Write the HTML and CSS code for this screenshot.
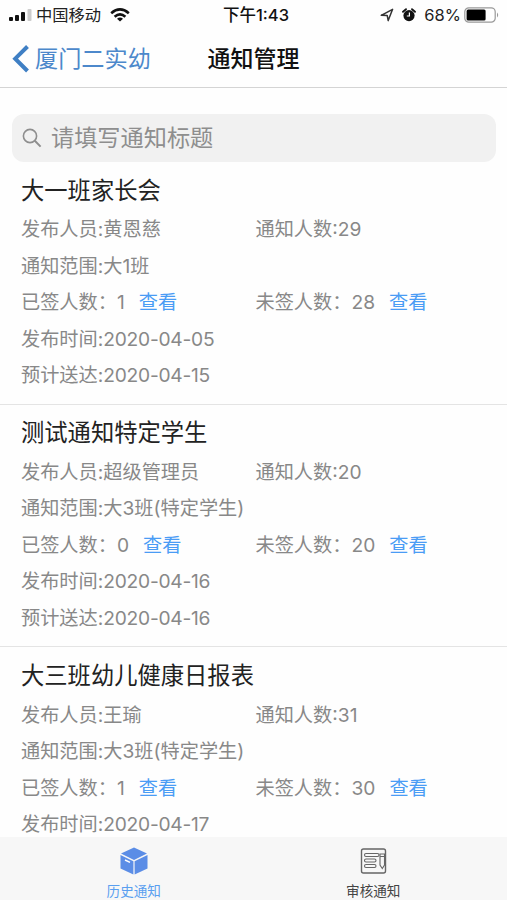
FILE: index.html
```
<!DOCTYPE html>
<html lang="zh-CN">
<head>
    <meta charset="UTF-8">
    <meta name="viewport" content="width=device-width, initial-scale=1.0">
    <title>通知管理</title>
    <link rel="stylesheet" href="styles.css">
</head>
<body>
    <div class="status-bar">
        <div class="status-left">
            <svg class="signal" viewBox="0 0 23 14" width="23" height="14">
                <rect x="0" y="9" width="4" height="4" rx="1" fill="#111"/>
                <rect x="6" y="7" width="4" height="6" rx="1" fill="#111"/>
                <rect x="12" y="4" width="4" height="9" rx="1" fill="#111"/>
                <rect x="18.5" y="1" width="4" height="12" rx="1" fill="#ccc"/>
            </svg>
            <span class="carrier">中国移动</span>
            <svg class="wifi" viewBox="0 0 20 14" width="20" height="14" fill="none" stroke="#111" stroke-width="2.6">
                <path d="M1.2 5.2Q10 -2.4 18.8 5.2"/>
                <path d="M4.6 8.7Q10 4 15.4 8.7"/>
                <path d="M10 13.6L7 10.8Q10 8.4 13 10.8Z" fill="#111" stroke="none"/>
            </svg>
        </div>
        <div class="status-time">下午1:43</div>
        <div class="status-right">
            <svg class="location" viewBox="0 0 14 14" width="14" height="14">
                <path d="M1.2 7.3L12.6 1.3L8.2 12.6L7.2 7.4Z" fill="none" stroke="#333" stroke-width="1.5" stroke-linejoin="round"/>
            </svg>
            <svg class="alarm" viewBox="0 0 14 14" width="14" height="14">
                <circle cx="7" cy="7.6" r="5.6" fill="#111"/>
                <path d="M1 3.8L4 1.2M13 3.8L10 1.2" stroke="#111" stroke-width="1.8" stroke-linecap="round"/>
                <path d="M7.4 4.6V8H4.8" fill="none" stroke="#fff" stroke-width="1.2"/>
            </svg>
            <span class="percent">68%</span>
            <svg class="battery" viewBox="0 0 36 16" width="36" height="16">
                <rect x="0.8" y="0.8" width="30.4" height="14.4" rx="4" fill="#fff" stroke="#999" stroke-width="1.2"/>
                <rect x="2.6" y="2.6" width="19" height="10.8" rx="1.5" fill="#000"/>
                <path d="M33 5.5Q35.4 8 33 10.5Z" fill="#999"/>
            </svg>
        </div>
    </div>

    <div class="nav-bar">
        <a class="back">
            <svg viewBox="0 0 18 30" width="18" height="30">
                <path d="M15.5 2.5L3.2 14.7L15.5 27" fill="none" stroke="#3f7fc4" stroke-width="4"/>
            </svg>
            <span>厦门二实幼</span>
        </a>
        <h1>通知管理</h1>
    </div>

    <div class="search">
        <svg viewBox="0 0 20 20" width="20" height="20">
            <circle cx="8" cy="8" r="6.6" fill="none" stroke="#8e8e8e" stroke-width="1.6"/>
            <path d="M12.8 12.8L18.6 18.6" stroke="#8e8e8e" stroke-width="2"/>
        </svg>
        <span>请填写通知标题</span>
    </div>

    <div class="list">
        <div class="notice">
            <h2>大一班家长会</h2>
            <div class="row">
                <div class="col">发布人员:黄恩慈</div>
                <div class="col">通知人数:29</div>
            </div>
            <div class="row">通知范围:大1班</div>
            <div class="row">
                <div class="col">已签人数：1<a class="view">查看</a></div>
                <div class="col">未签人数：28<a class="view">查看</a></div>
            </div>
            <div class="row">发布时间:<span class="date">2020-04-05</span></div>
            <div class="row">预计送达:<span class="date">2020-04-15</span></div>
        </div>
        <div class="notice">
            <h2>测试通知特定学生</h2>
            <div class="row">
                <div class="col">发布人员:超级管理员</div>
                <div class="col">通知人数:20</div>
            </div>
            <div class="row">通知范围:大3班(特定学生)</div>
            <div class="row">
                <div class="col">已签人数：0<a class="view">查看</a></div>
                <div class="col">未签人数：20<a class="view">查看</a></div>
            </div>
            <div class="row">发布时间:<span class="date">2020-04-16</span></div>
            <div class="row">预计送达:<span class="date">2020-04-16</span></div>
        </div>
        <div class="notice">
            <h2>大三班幼儿健康日报表</h2>
            <div class="row">
                <div class="col">发布人员:王瑜</div>
                <div class="col">通知人数:31</div>
            </div>
            <div class="row">通知范围:大3班(特定学生)</div>
            <div class="row">
                <div class="col">已签人数：1<a class="view">查看</a></div>
                <div class="col">未签人数：30<a class="view">查看</a></div>
            </div>
            <div class="row">发布时间:<span class="date">2020-04-17</span></div>
        </div>
    </div>

    <div class="tab-bar">
        <a class="tab active">
            <svg viewBox="0 0 28 28" width="28" height="28">
                <path d="M14 0.5L27 6.6L14 13L1 6.6Z" fill="#5b8de6"/>
                <path d="M0.5 8L13.4 14.2V27.6L0.5 21.4Z" fill="#5b8de6"/>
                <path d="M27.5 8L14.6 14.2V27.6L27.5 21.4Z" fill="#5b8de6"/>
                <path d="M5 13L10 15.3" stroke="#fff" stroke-width="1.4"/>
            </svg>
            <span>历史通知</span>
        </a>
        <a class="tab">
            <svg viewBox="0 0 28 28" width="28" height="28" fill="none" stroke="#666" stroke-width="1.1">
                <rect x="2.5" y="2" width="24" height="24" rx="2" stroke-width="1.4"/>
                <rect x="5.5" y="6.5" width="14.5" height="3" rx="1.5"/>
                <rect x="5.5" y="12" width="11.5" height="3" rx="1.5"/>
                <rect x="5.5" y="17.5" width="11.5" height="3" rx="1.5"/>
                <path d="M21 7H25.5V18L23.3 21.5L21 18ZM21 9.5H25.5"/>
            </svg>
            <span>审核通知</span>
        </a>
    </div>
</body>
</html>
```
FILE: styles.css
```
* {
    margin: 0;
    padding: 0;
    box-sizing: border-box;
}
body {
    height: 900px;
    display: flex;
    flex-direction: column;
    overflow: hidden;
    background: #fefefe;
    color: #888;
    font-family: Inter, 'Noto Sans CJK SC', sans-serif;
}
svg {
    display: block;
    flex: none;
}

/* Status bar */
.status-bar {
    flex: none;
    height: 30px;
    padding: 0 7px 0 9px;
    display: grid;
    grid-template-columns: 1fr auto 1fr;
    align-items: center;
    color: #222;
    font-size: 16.5px;
    line-height: 30px;
}
.status-left,
.status-right {
    display: flex;
    align-items: center;
}
.status-right {
    justify-content: flex-end;
}
.carrier {
    margin: 0 9px 0 4px;
    font-size: 16.3px;
}
.status-time {
    padding-left: 3px;
    color: #111;
    font-weight: 500;
}
.alarm {
    margin: 0 8px 0 8px;
}
.percent {
    margin-right: 3px;
}

/* Navigation */
.nav-bar {
    flex: none;
    height: 58px;
    display: grid;
    grid-template-columns: 1fr auto 1fr;
    align-items: center;
    border-bottom: 1px solid #d4d4d4;
}
.back {
    display: flex;
    align-items: center;
    padding-left: 12px;
    color: #4c88cb;
    font-size: 23.2px;
    line-height: 56px;
}
.back span {
    margin-left: 5px;
}
.nav-bar h1 {
    color: #111;
    font-size: 23px;
    font-weight: 500;
    line-height: 56px;
}

/* Search */
.search {
    flex: none;
    height: 48px;
    margin: 26px 11px 0 12px;
    padding-left: 10px;
    display: flex;
    align-items: center;
    border-radius: 12px;
    background: #f1f1f1;
    color: #8e8e8e;
    font-size: 23.2px;
    line-height: 46px;
}
.search span {
    margin-left: 9px;
}

/* Notices */
.list {
    flex: 1;
    min-height: 0;
    overflow: hidden;
}
.notice {
    height: 242.6px;
    padding: 8.6px 21px 0;
    border-bottom: 1px solid #e4e4e4;
}
.notice h2 {
    color: #222;
    font-size: 23.3px;
    font-weight: 400;
    line-height: 40.8px;
}
.row {
    display: flex;
    font-size: 19.2px;
    line-height: 36.5px;
    white-space: nowrap;
}
.col {
    flex: none;
    width: 234.5px;
}
.date {
    letter-spacing: -0.25px;
}
.view {
    margin-left: 14px;
    color: #4a9cf5;
}

/* Tab bar */
.tab-bar {
    flex: none;
    height: 63px;
    padding: 0 14px;
    display: flex;
    background: #f7f7f7;
}
.tab {
    flex: 1;
    padding-top: 10px;
    display: flex;
    flex-direction: column;
    align-items: center;
    color: #444;
    font-size: 13.6px;
    line-height: 20px;
}
.tab span {
    margin-top: 6px;
}
.tab.active {
    color: #5a9ff0;
}
```
